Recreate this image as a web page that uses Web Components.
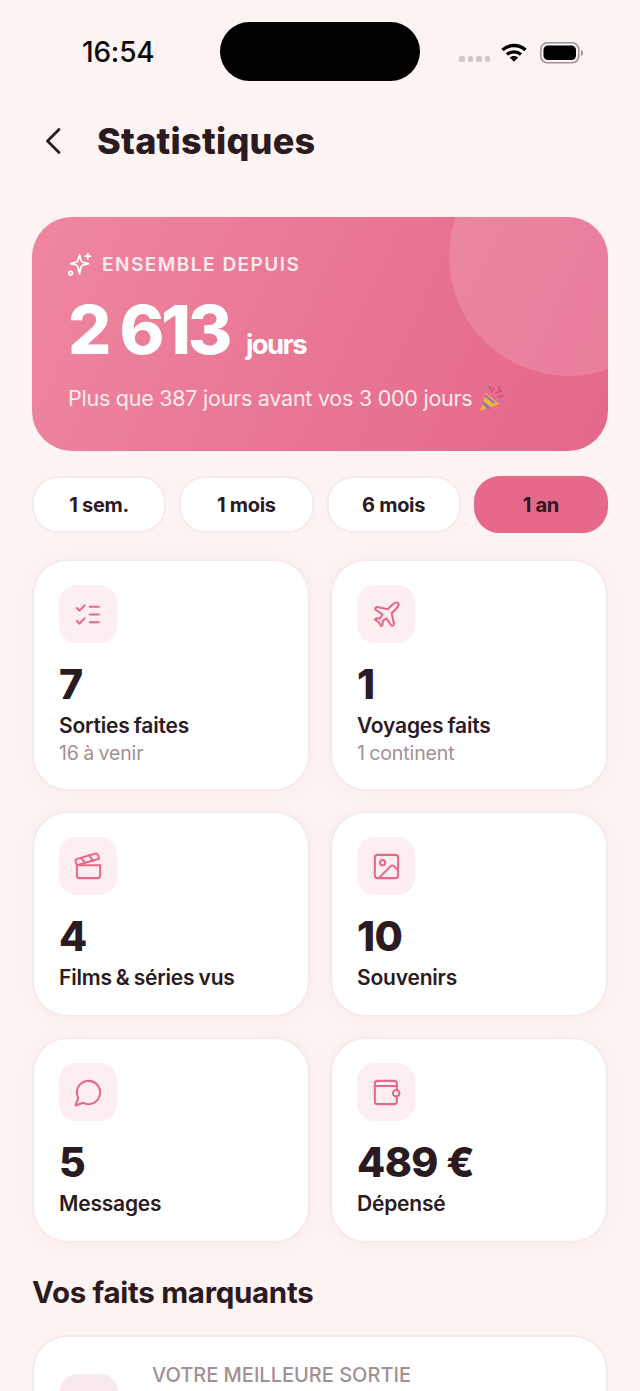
<!DOCTYPE html>
<html lang="fr"><head><meta charset="utf-8"><title>Statistiques</title>
<style>
html,body{margin:0;padding:0;height:1391px;overflow:hidden;background:#fcf3f2}
body{font-family:"Inter","Liberation Sans",sans-serif;color:#2b1a1f}
</style></head><body>
<stats-page>
  <status-bar></status-bar>
  <page-header>Statistiques</page-header>
  <hero-card></hero-card>
  <range-tabs>
    <range-tab>1 sem.</range-tab><range-tab>1 mois</range-tab><range-tab>6 mois</range-tab><range-tab active>1 an</range-tab>
  </range-tabs>
  <stat-grid>
    <stat-card value="7" label="Sorties faites" sub="16 à venir" icon="list"></stat-card>
    <stat-card value="1" label="Voyages faits" sub="1 continent" icon="plane"></stat-card>
    <stat-card value="4" label="Films &amp; séries vus" icon="film"></stat-card>
    <stat-card value="10" label="Souvenirs" icon="image"></stat-card>
    <stat-card value="5" label="Messages" icon="chat"></stat-card>
    <stat-card value="489 €" label="Dépensé" icon="wallet"></stat-card>
  </stat-grid>
  <section-title>Vos faits marquants</section-title>
  <highlight-card>VOTRE MEILLEURE SORTIE</highlight-card>
</stats-page>
<script>
const ICONS={
 list:'<path d="m3 17 2 2 4-4M3 7l2 2 4-4M13 6h7M13 12h7M13 18h7"/>',
 plane:'<path d="M17.8 19.2 16 11l3.5-3.5C21 6 21.5 4 21 3c-1-.5-3 0-4.500 1.500L13 8 4.800 6.200c-.5-.1-.9.1-1.100.5l-.3.5c-.2.500-.1 1 .3 1.300L9 12l-2 3H4l-1 1 3 2 2 3 1-1v-3l3-2 3.500 5.300c.3.4.8.5 1.300.3l.5-.2c.4-.3.6-.7.5-1.200z"/>',
 film:'<path d="M20.200 6 3 11l-.9-2.400c-.3-1.100.3-2.200 1.300-2.500l13.500-4c1.100-.3 2.200.3 2.500 1.300Z"/><path d="m6.200 5.300 3.100 3.900M12.400 3.400l3.100 4"/><path d="M3 11h18v8a2 2 0 0 1-2 2H5a2 2 0 0 1-2-2Z"/>',
 image:'<rect x="3" y="3" width="18" height="18" rx="2"/><circle cx="9" cy="9" r="2"/><path d="m21 15-3.086-3.086a2 2 0 0 0-2.828 0L6 21"/>',
 chat:'<path d="M7.900 20A9 9 0 1 0 4 16.100L2 22Z"/>',
 wallet:'<path d="M20 9V5a2 2 0 0 0-2-2H5a2 2 0 0 0-2 2v14a2 2 0 0 0 2 2h13a2 2 0 0 0 2-2v-3"/><path d="M3 7h17"/><rect x="17" y="10" width="5" height="5" rx="2.500"/>'
};
function def(name,html){
  customElements.define(name,class extends HTMLElement{
    connectedCallback(){
      if(this.shadowRoot)return;
      const r=this.attachShadow({mode:'open'});
      r.innerHTML=typeof html==='function'?html(this):html;
    }
  });
}
def('stats-page',`<style>:host{display:flex;flex-direction:column;height:1391px;overflow:hidden;background:#fcf3f2}::slotted(*){flex:none}</style><slot></slot>`);
def('status-bar',`<style>
:host{display:grid;grid-template-columns:1fr 200px 1fr;height:59px;padding-top:22px}
.t{font:500 28px/1 "Inter","Liberation Sans",sans-serif;color:#0b0b0b;padding:16px 0 0 82px;letter-spacing:-.2px}
.i{background:#000;height:59px;border-radius:30px}
.r{display:flex;align-items:flex-start;padding:19px 0 0 39px}
.d{display:flex;gap:3px;margin-top:15px}.d b{width:5.500px;height:5.500px;border-radius:2px;background:#cfc9c9;display:block}
svg{display:block}
</style><div class="t">16:54</div><div class="i"></div><div class="r"><div class="d"><b></b><b></b><b></b><b></b></div>
<svg width="26" height="22" viewBox="0 0 26 22" style="margin:1px 0 0 11px"><path d="M1.500 8C8 2 18 2 24.500 8" fill="none" stroke="#000" stroke-width="3.400"/><path d="M6 12.500c4-3.600 10-3.600 14 0" fill="none" stroke="#000" stroke-width="3.200"/><path d="M8.800 15.500 13 19.800l4.200-4.300c-2.400-2-6-2-8.400 0z" fill="#000"/></svg>
<svg width="44" height="22" viewBox="0 0 44 22" style="margin:1px 0 0 13px"><rect x=".8" y=".8" width="38" height="20" rx="6.500" fill="none" stroke="#9b9496" stroke-width="1.500"/><rect x="3.500" y="3.500" width="32.500" height="14.500" rx="4.500" fill="#000"/><path d="M41 8v6c1.300-.4 2-1.500 2-3s-.7-2.600-2-3z" fill="#9b9496"/></svg>
</div>`);
def('page-header',`<style>
:host{display:flex;align-items:center;height:62px;margin-top:29px;padding-left:44px}
svg{display:block;margin-right:35px}
h1{margin:0;font:800 36px/62px "Inter","Liberation Sans",sans-serif;letter-spacing:.25px;color:#2b1a1f}
</style><svg width="18" height="28" viewBox="0 0 18 28"><path d="M15 2.500 3.500 14 15 25.500" fill="none" stroke="#2b1a1f" stroke-width="2.800" stroke-linecap="round" stroke-linejoin="round"/></svg><h1><slot></slot></h1>`);
def('hero-card',`<style>
:host{display:block;position:relative;overflow:hidden;height:234px;margin:45px 32px 0;border-radius:40px;box-sizing:border-box;padding:33px 36px 0;color:#fff;background:linear-gradient(115deg,#ee87a0 0%,#e76f8f 70%,#e5688a 100%);font-family:"Inter","Liberation Sans",sans-serif}
.c{position:absolute;width:240px;height:240px;border-radius:50%;background:rgba(255,255,255,.14);top:-81px;right:-81px}
.h{display:flex;align-items:center;gap:10px;height:28px;font-weight:600;font-size:19px;letter-spacing:1.500px;color:#fdebef;white-space:nowrap;margin-left:-1px}
.n{display:flex;align-items:baseline;margin-top:14px;height:74px;line-height:74px;font-weight:800;font-size:68px;letter-spacing:-3.400px;white-space:nowrap}
.n span{font-size:27.500px;font-weight:700;margin-left:17px;letter-spacing:-1.600px}
.s{margin-top:17px;display:flex;align-items:center;font-size:21.500px;line-height:30px;color:#fdebef;letter-spacing:-.25px;white-space:nowrap;position:relative}
svg{display:block;flex:none}
</style><div class="c"></div>
<div class="h"><svg width="25" height="25" viewBox="0 0 24 24" fill="none" stroke="#fff" stroke-width="1.700" stroke-linecap="round" stroke-linejoin="round"><path d="M12 2.500l1.400 5.300a3 3 0 0 0 2.100 2.100l5 1.300-5 1.300a3 3 0 0 0-2.100 2.100L12 21l-1.400-6.400a3 3 0 0 0-2.100-2.100l-5-1.300 5-1.300a3 3 0 0 0 2.100-2.100z"/><path d="M20 1.500v5M17.500 4h5"/><circle cx="3.500" cy="20.500" r="1.800"/></svg>ENSEMBLE DEPUIS</div>
<div class="n">2 613<span>jours</span></div>
<div class="s">Plus que 387 jours avant vos 3 000 jours
<svg width="28" height="28" viewBox="0 0 28 28" style="margin-left:5px"><path d="M9 9 22 20 3 27z" fill="#f2b632"/><path d="M6.500 17 14 24l-3 1.300-6-5.500zM9 10.500l9.500 8.200-2.300.9-8.500-7.300z" fill="#8d6fc9"/><path d="M12 3c2 1 1 3 3 4M22 3l1 4M19 9l5-2M16 4l1 1M26 12l-5 1" fill="none" stroke="#d8507a" stroke-width="1.800" stroke-linecap="round"/><circle cx="24" cy="16" r="1.300" fill="#7f8fd8"/><circle cx="8" cy="3" r="1.300" fill="#7f8fd8"/></svg></div>`);
def('range-tabs',`<style>:host{display:grid;grid-template-columns:repeat(4,1fr);gap:13px;margin:25px 32px 0}</style><slot></slot>`);
def('range-tab',t=>`<style>
:host{display:flex;align-items:center;justify-content:center;height:57px;border-radius:26px;box-sizing:border-box;background:#fff;border:2px solid #f6eaec;font:700 20px/1 "Inter","Liberation Sans",sans-serif;letter-spacing:-.3px;color:#2b1a1f}
:host([active]){background:#e6698a;border-color:#e6698a}
</style><slot></slot>`);
def('stat-grid',`<style>:host{display:grid;grid-template-columns:278px 278px;column-gap:20px;row-gap:20px;margin:26px 32px 0}</style><slot></slot>`);
def('stat-card',h=>{const s=h.getAttribute('sub');return `<style>
:host{display:block;box-sizing:border-box;background:#fff;border:2px solid #f6eaec;border-radius:36px;padding:24px 25px 0;height:${s?232:206}px;box-shadow:0 2px 14px rgba(232,105,138,.05);font-family:"Inter","Liberation Sans",sans-serif}
.i{width:58px;height:58px;border-radius:18px;background:#fdeef1;display:flex;align-items:center;justify-content:center}
svg{display:block;fill:none;stroke:#e6698a;stroke-width:1.600;stroke-linecap:round;stroke-linejoin:round}
.v{margin-top:17px;font-weight:800;font-size:41px;line-height:48px;letter-spacing:-.6px;color:#2b1a1f}
.l{margin-top:4px;font-weight:600;font-size:21px;line-height:28px;letter-spacing:-.2px;word-spacing:-1px;color:#2b1a1f;white-space:nowrap}
.s{font-weight:400;font-size:19.500px;line-height:26px;letter-spacing:-.1px;word-spacing:-1px;color:#a38f95}
</style><div class="i"><svg width="31" height="31" viewBox="0 0 24 24">${ICONS[h.getAttribute('icon')]}</svg></div>
<div class="v">${h.getAttribute('value')}</div><div class="l">${h.getAttribute('label').replace('&','&amp;')}</div>${s?`<div class="s">${s}</div>`:''}`});
def('section-title',`<style>:host{display:block;margin:29px 32px 0;font:700 29.500px/40px "Inter","Liberation Sans",sans-serif;letter-spacing:-.3px;color:#2b1a1f;white-space:nowrap}</style><slot></slot>`);
def('highlight-card',`<style>
:host{display:flex;gap:34px;box-sizing:border-box;height:200px;margin:23px 32px 0;padding:26px 24px 0 26px;background:#fff;border:2px solid #f6eaec;border-radius:36px;font-family:"Inter","Liberation Sans",sans-serif}
.i{width:58px;height:58px;border-radius:18px;background:#f9e9ed;margin-top:11px;flex:none}
.t{font-weight:500;font-size:20px;line-height:24px;color:#a38f95;letter-spacing:0;white-space:nowrap}
</style><div class="i"></div><div class="t"><slot></slot></div>`);
</script>
</body></html>
